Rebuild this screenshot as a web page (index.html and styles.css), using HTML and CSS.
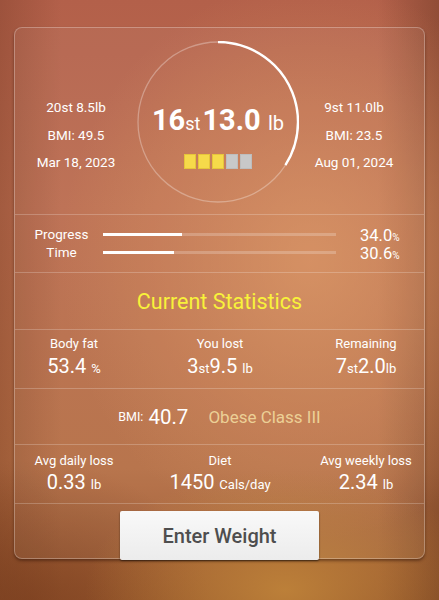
FILE: index.html
```html
<!DOCTYPE html>
<html>
<head>
<meta charset="utf-8">
<link rel="stylesheet" href="styles.css">
</head>
<body>
<div class="card">
  <section class="sec top">
    <div class="side">
      <div>20st 8.5lb</div>
      <div>BMI: 49.5</div>
      <div>Mar 18, 2023</div>
    </div>
    <div class="circle">
      <svg class="ring" width="162" height="162" viewBox="0 0 162 162">
        <circle cx="81" cy="81" r="80" fill="none" stroke="rgba(255,255,255,0.3)" stroke-width="1.3"/>
        <circle cx="81" cy="81" r="80" fill="none" stroke="#fff" stroke-width="2.4" stroke-dasharray="170.9 502.7" transform="rotate(-90 81 81)"/>
      </svg>
      <div class="circle-inner">
        <div class="current"><b>16</b><span class="st">st</span><b>13.0</b> <span class="lb">lb</span></div>
        <div class="blocks">
          <span class="blk on"></span><span class="blk on"></span><span class="blk on"></span><span class="blk"></span><span class="blk"></span>
        </div>
      </div>
    </div>
    <div class="side">
      <div>9st 11.0lb</div>
      <div>BMI: 23.5</div>
      <div>Aug 01, 2024</div>
    </div>
  </section>

  <section class="sec progress">
    <div class="prow">
      <span class="plabel">Progress</span>
      <div class="track"><div class="fill" style="width:34.0%"></div></div>
      <span class="pval">34.0<small>%</small></span>
    </div>
    <div class="prow">
      <span class="plabel">Time</span>
      <div class="track"><div class="fill" style="width:30.6%"></div></div>
      <span class="pval">30.6<small>%</small></span>
    </div>
  </section>

  <section class="sec heading">Current Statistics</section>

  <section class="trio trio-a">
    <div class="cell"><div class="lbl">Body fat</div><div class="val">53.4 <small class="u">%</small></div></div>
    <div class="cell"><div class="lbl">You lost</div><div class="val">3<small class="st2">st</small>9.5 <small class="u">lb</small></div></div>
    <div class="cell"><div class="lbl">Remaining</div><div class="val">7<small class="st2">st</small>2.0<small class="u">lb</small></div></div>
  </section>

  <section class="bmi">
    <span class="bmi-k">BMI:</span><span class="bmi-v">40.7</span><span class="bmi-c">Obese Class III</span>
  </section>

  <section class="trio trio-b">
    <div class="cell"><div class="lbl">Avg daily loss</div><div class="val">0.33 <small class="u">lb</small></div></div>
    <div class="cell"><div class="lbl">Diet</div><div class="val">1450 <small class="u">Cals/day</small></div></div>
    <div class="cell"><div class="lbl">Avg weekly loss</div><div class="val">2.34 <small class="u">lb</small></div></div>
  </section>

  <div class="actions">
    <button class="btn">Enter Weight</button>
  </div>
</div>
</body>
</html>
```
FILE: styles.css
```css
* { box-sizing: border-box; }
html, body { margin: 0; padding: 0; }
body {
  width: 439px;
  height: 600px;
  overflow: hidden;
  font-family: Roboto, "Noto Sans", sans-serif;
  color: #fff;
  background:
    radial-gradient(ellipse 200px 120px at 285px 590px, rgba(192,132,58,0.9), rgba(192,132,58,0) 100%),
    radial-gradient(ellipse 250px 280px at 310px 260px, rgba(222,152,98,0.7), rgba(222,152,98,0) 100%),
    radial-gradient(ellipse 180px 140px at 30px 600px, rgba(120,60,30,0.6), rgba(120,60,30,0) 100%),
    linear-gradient(to right, rgba(90,40,20,0.25), rgba(90,40,20,0) 14%, rgba(90,40,20,0) 86%, rgba(80,40,20,0.35)),
    linear-gradient(to bottom, #b3604a 0%, #bb6c4e 35%, #b56e44 78%, #94552c 100%);
  padding-top: 27px;
}
.card {
  margin-left: 14px;
  width: 411px;
  border: 1px solid rgba(255,255,255,0.28);
  border-radius: 8px;
  background: rgba(255,255,255,0.05);
  box-shadow: 0 2px 3px rgba(50,20,8,0.5);
}
.sec {
  border-bottom: 1px solid rgba(255,255,255,0.22);
}
.top {
  height: 187px;
  display: grid;
  grid-template-columns: 122px 162px 110px;
  align-items: start;
}
.side {
  padding-top: 66px;
  text-align: center;
  font-size: 13.5px;
  line-height: 27.5px;
}
.circle {
  margin-top: 13px;
  width: 162px;
  height: 162px;
  display: grid;
}
.circle > * { grid-area: 1 / 1; }
.circle-inner {
  padding-top: 62px;
  display: flex;
  flex-direction: column;
  align-items: center;
}
.current {
  font-size: 29px;
  line-height: 34px;
  white-space: nowrap;
}
.current b { font-weight: 700; }
.current .st { font-size: 18px; line-height: 1; margin-right: 2px; }
.current .lb { font-size: 20px; line-height: 1; }
.blocks {
  margin-top: 17px;
  display: flex;
  gap: 1.5px;
}
.blk {
  width: 12.5px;
  height: 15px;
  background: #c8c8c8;
  border: 1px solid #bdbdbd;
}
.blk.on { background: #f6da4a; border-color: #e6c53a; }

.progress {
  height: 58px;
  padding-top: 10px;
}
.prow {
  display: grid;
  grid-template-columns: 83px 233px auto;
  grid-auto-rows: 18px;
  align-items: center;
  padding-left: 5px;
}
.plabel {
  text-align: center;
  font-size: 13.5px;
  line-height: 18px;
}
.track {
  height: 3px;
  background: rgba(255,255,255,0.22);
}
.fill {
  height: 3px;
  background: #fff;
}
.pval {
  margin-left: 24px;
  margin-top: 5px;
  font-size: 16.5px;
  line-height: 18px;
}
.pval small { font-size: 10px; }

.heading {
  height: 57px;
  display: flex;
  align-items: center;
  justify-content: center;
  color: #f8f23a;
  font-size: 21.5px;
}

.trio {
  height: 58px;
  display: grid;
  grid-template-columns: repeat(3, 146px);
  margin: 0 -14px;
}
.trio-a { padding-top: 5px; }
.trio-b { padding-top: 7px; }
.cell { text-align: center; }
.lbl { font-size: 13px; line-height: 18px; }
.trio-a .lbl { margin-bottom: 1px; }
.val { font-size: 20px; line-height: 24px; white-space: nowrap; }
.val .u { font-size: 13px; }
.val .st2 { font-size: 13px; }

.bmi {
  height: 57px;
  display: flex;
  align-items: center;
  justify-content: center;
  border-top: 1px solid rgba(255,255,255,0.22);
  border-bottom: 1px solid rgba(255,255,255,0.22);
}
.bmi-k { font-size: 12.5px; margin-right: 5px; }
.bmi-v { font-size: 20.5px; margin-right: 20px; }
.bmi-c { font-size: 17px; color: #ecd096; }

.actions {
  border-top: 1px solid rgba(255,255,255,0.22);
  padding-top: 7px;
  display: flex;
  justify-content: center;
}
.btn {
  width: 199px;
  height: 49px;
  margin-bottom: -2px;
  border: none;
  border-radius: 2px;
  background: linear-gradient(to bottom, #f9f9f9, #ececec);
  box-shadow: 0 1px 2px rgba(0,0,0,0.55);
  font-family: Roboto, "Noto Sans", sans-serif;
  font-size: 20px;
  font-weight: 500;
  color: #4e4e4e;
}
```
